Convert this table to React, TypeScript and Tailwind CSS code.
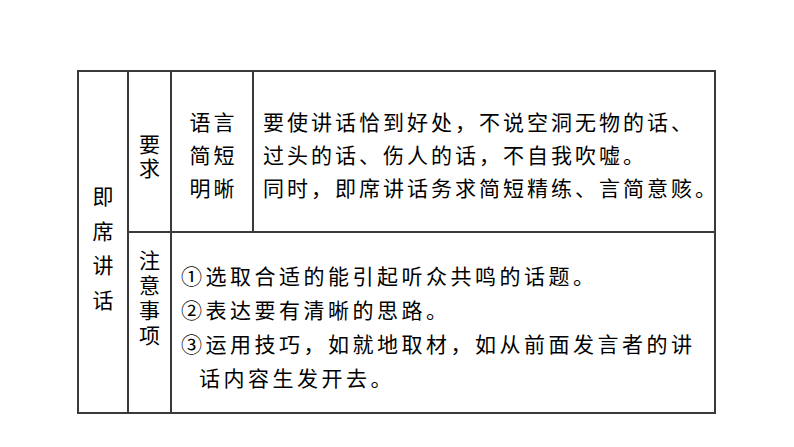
const font = { fontFamily: '"Noto Sans CJK SC", "Noto Sans", sans-serif' };

function VText({ chars, lead }: { chars: string; lead: string }) {
  return (
    <div className={`flex flex-col items-center ${lead}`}>
      {chars.split("").map((c, i) => (
        <div key={i}>{c}</div>
      ))}
    </div>
  );
}

export default function App() {
  return (
    <div
      className="w-[794px] h-[447px] bg-white text-black text-[21px] pl-[77px] pt-[70px]"
      style={font}
    >
      <div className="flex w-[639px] h-[344px] border-2 border-[#3a3a3a]">
        {/* 即席讲话 */}
        <div className="w-[50px] shrink-0 border-r-2 border-[#3a3a3a] pt-[106px]">
          <VText chars="即席讲话" lead="leading-[34.7px]" />
        </div>

        <div className="flex flex-col flex-1 min-w-0">
          {/* 要求 row */}
          <div className="flex h-[161px] border-b-2 border-[#3a3a3a]">
            <div className="w-[43px] shrink-0 border-r-2 border-[#3a3a3a] pt-[59px]">
              <VText chars="要求" lead="leading-[24px]" />
            </div>
            <div className="w-[82px] shrink-0 border-r-2 border-[#3a3a3a] pt-[33px] pl-[3px] flex flex-col items-center tracking-[3px] leading-[33px]">
              <div>语言</div>
              <div>简短</div>
              <div>明晰</div>
            </div>
            <div className="flex-1 min-w-0 pt-[33px] pl-[9px] tracking-[3px] leading-[33px] whitespace-nowrap">
              <div>要使讲话恰到好处，不说空洞无物的话、</div>
              <div>过头的话、伤人的话，不自我吹嘘。</div>
              <div>同时，即席讲话务求简短精练、言简意赅。</div>
            </div>
          </div>

          {/* 注意事项 row */}
          <div className="flex flex-1">
            <div className="w-[43px] shrink-0 border-r-2 border-[#3a3a3a] pt-[14px]">
              <VText chars="注意事项" lead="leading-[25px]" />
            </div>
            <div className="flex-1 min-w-0 pt-[25px] pl-[9px] tracking-[3.5px] leading-[34px] whitespace-nowrap">
              <div>①选取合适的能引起听众共鸣的话题。</div>
              <div>②表达要有清晰的思路。</div>
              <div>③运用技巧，如就地取材，如从前面发言者的讲</div>
              <div className="pl-[18px]">话内容生发开去。</div>
            </div>
          </div>
        </div>
      </div>
    </div>
  );
}
